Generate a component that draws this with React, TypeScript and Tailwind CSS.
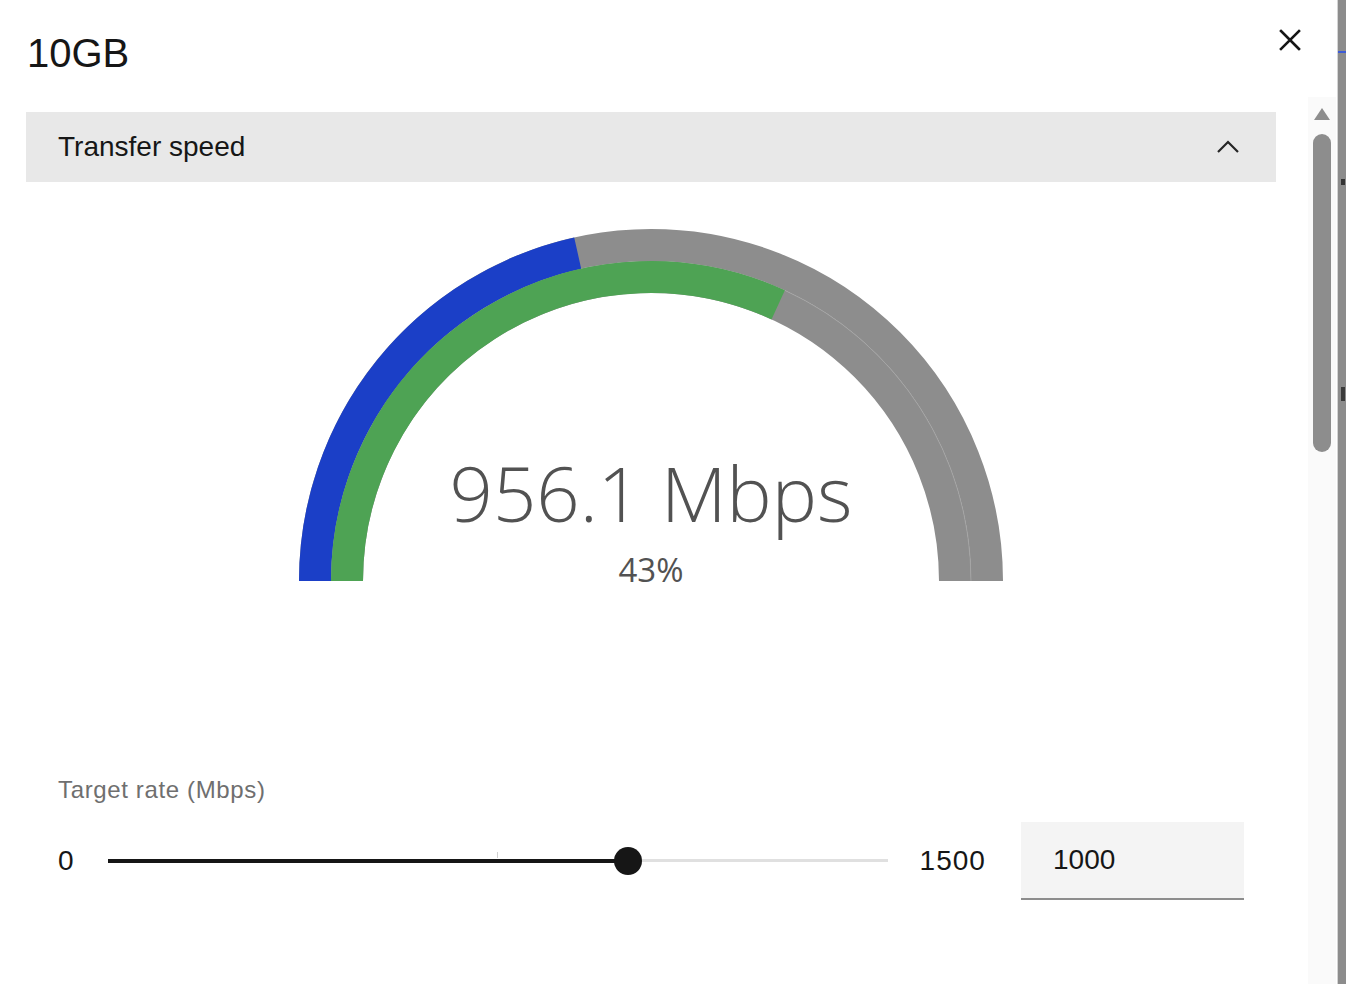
import React from 'react'

const CX = 360
const CY = 356

function arcPath(r: number, from: number, to: number) {
  // fractions measured from the left end (0) to the right end (1)
  const a1 = Math.PI * (1 - from)
  const a2 = Math.PI * (1 - to)
  const x1 = CX + r * Math.cos(a1)
  const y1 = CY - r * Math.sin(a1)
  const x2 = CX + r * Math.cos(a2)
  const y2 = CY - r * Math.sin(a2)
  return `M ${x1} ${y1} A ${r} ${r} 0 0 1 ${x2} ${y2}`
}

function Gauge() {
  const outer = 0.43
  const inner = 956.1 / 1500

  return (
    <div className="relative mx-auto mt-[43px] h-[360px] w-[720px]">
      <svg width="720" height="360" viewBox="0 0 720 360" className="block">
        <path d={arcPath(336, 0, 1)} fill="none" stroke="#8d8d8d" strokeWidth="32" />
        <path d={arcPath(304, 0, 1)} fill="none" stroke="#8d8d8d" strokeWidth="32" />
        <path d={arcPath(320, inner, 1)} fill="none" stroke="#a3a3a3" strokeWidth="0.8" />
        <path d={arcPath(336, 0, outer)} fill="none" stroke="#1b3fc7" strokeWidth="32" />
        <path d={arcPath(304, 0, inner)} fill="none" stroke="#4ea354" strokeWidth="32" />
      </svg>

      {/* readout */}
      <div
        className="absolute left-0 right-0 top-[230px] text-center text-[76px] font-light leading-none text-[#525252]"
        style={{ fontFamily: '"Open Sans", "Liberation Sans", sans-serif' }}
      >
        956.1 Mbps
      </div>
      <div
        className="absolute left-0 right-0 top-[328px] text-center text-[33px] font-normal leading-none text-[#525252]"
        style={{ fontFamily: '"Open Sans", "Liberation Sans", sans-serif' }}
      >
        43%
      </div>
    </div>
  )
}

function Slider() {
  return (
    <div className="flex items-center">
      <span className="text-[28px] leading-none text-[#161616]">0</span>
      <div className="relative ml-[34px] h-[28px] w-[780px]">
        <div className="absolute left-0 right-0 top-[12px] h-[3px] bg-[#e0e0e0]" />
        <div className="absolute left-[389px] top-[5px] h-[6px] w-[1px] bg-[#d0d0d0]" />
        <div className="absolute left-0 top-[12px] h-[4px] w-[520px] bg-[#161616]" />
        <div className="absolute left-[506px] top-0 h-[28px] w-[28px] rounded-full bg-[#161616]" />
      </div>
      <span className="ml-[32px] text-[28px] leading-none tracking-[1px] text-[#161616]">1500</span>
      <div className="ml-auto flex h-[78px] w-[223px] items-center border-b-2 border-[#8d8d8d] bg-[#f4f4f4] pl-[32px] text-[28px] text-[#161616]">
        1000
      </div>
    </div>
  )
}

export default function App() {
  return (
    <div
      className="flex h-[984px] w-[1346px] overflow-hidden bg-white"
      style={{ fontFamily: '"Liberation Sans", Arial, sans-serif' }}
    >
      {/* Modal */}
      <div className="flex h-[984px] w-[1337px] flex-col overflow-hidden">
        {/* Header */}
        <div className="flex h-[97px] shrink-0 items-start justify-between pl-[27px] pr-[35px]">
          <h1 className="pt-[33px] text-[40px] font-normal leading-none text-[#161616]">10GB</h1>
          <svg width="24" height="24" viewBox="0 0 24 24" className="mt-[28px]">
            <path d="M3 3 L21 21 M21 3 L3 21" stroke="#161616" strokeWidth="2.6" strokeLinecap="square" />
          </svg>
        </div>

        <div className="flex min-h-0 flex-1">
          {/* Content */}
          <div className="ml-[26px] w-[1250px] shrink-0 pt-[15px]">
            <div className="flex h-[70px] items-center justify-between bg-[#e8e8e8] pl-[32px] pr-[36px]">
              <span className="text-[28px] leading-none text-[#161616]">Transfer speed</span>
              <svg width="24" height="16" viewBox="0 0 24 16">
                <path d="M2 13 L12 3 L22 13" fill="none" stroke="#262626" strokeWidth="2.2" />
              </svg>
            </div>

            <div className="h-[798px] border-b-2 border-[#dcdcdc]">
              <Gauge />
              <div className="px-[32px]">
                <div className="mt-[193px] text-[24px] leading-none tracking-[0.64px] text-[#6f6f6f]">
                  Target rate (Mbps)
                </div>
                <div className="mt-[20px]">
                  <Slider />
                </div>
              </div>
            </div>
          </div>

          {/* Scrollbar */}
          <div className="ml-[32px] flex w-[28px] shrink-0 flex-col items-center bg-[#fafafa] pt-[10px]">
            <svg width="18" height="14" viewBox="0 0 18 14">
              <path d="M9 1 L17 13 L1 13 Z" fill="#8d8d8d" />
            </svg>
            <div className="mt-[13px] h-[318px] w-[18px] rounded-full bg-[#8d8d8d]" />
          </div>
        </div>
      </div>

      {/* Backdrop strip */}
      <div className="flex w-[9px] shrink-0 flex-col border-l border-[#d4d4d4] bg-[#8c8c8c]">
        <div className="mt-[51px] h-[2px] bg-[#3d5bd6]" />
        <div className="ml-[3px] mt-[126px] h-[6px] w-[4px] bg-[#333333]" />
        <div className="ml-[3px] mt-[202px] h-[14px] w-[4px] bg-[#3a3a3a]" />
      </div>
    </div>
  )
}
